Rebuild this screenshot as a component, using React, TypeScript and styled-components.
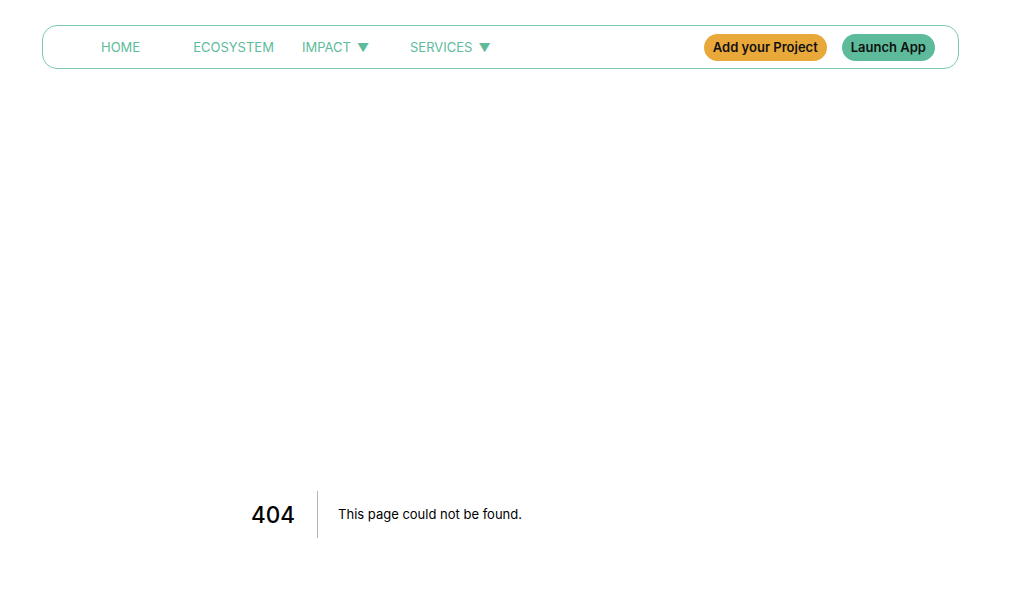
import styled, { createGlobalStyle } from "styled-components";

const GlobalStyle = createGlobalStyle`
  html, body {
    margin: 0;
    padding: 0;
    background: #ffffff;
    font-family: Inter, "Liberation Sans", Arial, sans-serif;
  }
`;

// Styled Components
const Page = styled.div`
  width: 1024px;
  height: 600px;
  display: flex;
  flex-direction: column;
`;

const NavBar = styled.nav`
  box-sizing: border-box;
  margin: 25px 0 0 42px;
  width: 917px;
  height: 44px;
  border: 1px solid #7ccaae;
  border-radius: 15px;
  display: flex;
  align-items: center;
  padding: 0 23px 0 0;
`;

const NavLinks = styled.div`
  display: flex;
  align-items: center;
  flex: 1;
`;

const NavItem = styled.a<{ $offset: number }>`
  margin-left: ${(p) => p.$offset}px;
  color: #5dbb9b;
  font-size: 13px;
  text-decoration: none;
  display: flex;
  align-items: center;
  gap: 6px;
  cursor: pointer;
`;

const Caret = styled.span`
  color: #5dbb9b;
  font-size: 12px;
`;

const Actions = styled.div`
  display: flex;
  align-items: center;
  gap: 15px;
`;

const Pill = styled.button<{ $bg: string }>`
  height: 27px;
  border: none;
  border-radius: 14px;
  background: ${(p) => p.$bg};
  color: #111;
  font-family: Inter, "Liberation Sans", Arial, sans-serif;
  font-weight: 600;
  font-size: 13px;
  padding: 0 9px;
  cursor: pointer;
`;

const NotFound = styled.main`
  display: flex;
  align-items: center;
  margin: 422px 0 0 251px;
`;

const Code = styled.h1`
  margin: 0 20px 0 0;
  padding-right: 22px;
  font-size: 22.5px;
  font-weight: 500;
  line-height: 47px;
  color: #000;
  border-right: 1px solid rgba(0, 0, 0, 0.3);
`;

const Message = styled.h2`
  margin: 0;
  font-size: 13px;
  font-weight: 400;
  line-height: 47px;
  color: #000;
`;

const App = () => {
  return (
    <Page>
      <GlobalStyle />
      <NavBar>
        <NavLinks>
          <NavItem $offset={58}>HOME</NavItem>
          <NavItem $offset={53}>ECOSYSTEM</NavItem>
          <NavItem $offset={28}>
            IMPACT <Caret>▼</Caret>
          </NavItem>
          <NavItem $offset={41}>
            SERVICES <Caret>▼</Caret>
          </NavItem>
        </NavLinks>
        <Actions>
          <Pill $bg="#e9a93a">Add your Project</Pill>
          <Pill $bg="#5dbb9b">Launch App</Pill>
        </Actions>
      </NavBar>
      <NotFound>
        <Code>404</Code>
        <Message>This page could not be found.</Message>
      </NotFound>
    </Page>
  );
};

export default App;
